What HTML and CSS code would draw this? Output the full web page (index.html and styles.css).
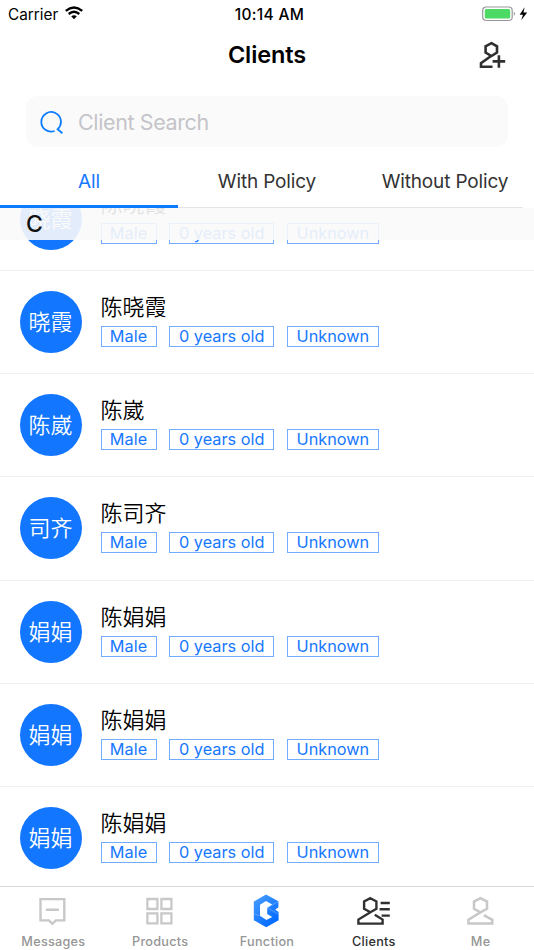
FILE: index.html
```html
<!DOCTYPE html>
<html lang="en">
<head>
<meta charset="utf-8">
<title>Clients</title>
<link rel="stylesheet" href="styles.css">
</head>
<body>
<div class="app">
  <header class="status">
    <div class="carrier"><span class="carrier-name">Carrier</span>
      <svg width="18" height="14" viewBox="0 0 18 14" fill="none" stroke="#000" stroke-width="2.4"><path d="M.8 4.8Q9-2 17.2 4.8M3.7 8Q9 3.5 14.3 8"/><path d="M6.2 10.3Q9 8.2 11.8 10.3L9 13.2Z" fill="#000" stroke="none"/></svg>
    </div>
    <span class="time">10:14 AM</span>
    <svg class="battery" width="46" height="16" viewBox="0 0 46 16"><rect x=".7" y="1" width="29.5" height="13.5" rx="3.5" fill="#fff" stroke="#999" stroke-width="1.2"/><rect x="2.8" y="3.1" width="25.4" height="9.4" rx="1.6" fill="#4cd964"/><path d="M31.8 5.6Q34.3 7.8 31.8 10Z" fill="#999"/><path d="M42.6 1.3L37.6 8.7H41L39.2 14.3L45.2 6.5H41.5Z"/></svg>
  </header>
  <div class="titlebar">
    <h1>Clients</h1>
    <svg class="add" width="28" height="28" viewBox="0 0 28 28" fill="none" stroke="#303030" stroke-width="2.6"><path d="M13.4 2.2L19 5.3V11.5L13.4 15L7.6 11.5V5.3Z M13.4 14.7L3 22.2V25.7H14.5M14.6 20.4H27.2M20.9 14.2V26.7"/></svg>
  </div>
  <div class="search">
    <svg width="24" height="24" viewBox="0 0 24 24" fill="none" stroke="#0b7cff" stroke-width="1.8"><path d="M14.6 21A9.8 9.8 0 1 1 17.6 19.2L22.4 23.2M17.6 19.2L19.2 17.6"/></svg>
    <span class="placeholder">Client Search</span>
  </div>
  <nav class="tabs">
    <div class="tab active"><span>All</span></div>
    <div class="tab"><span>With Policy</span></div>
    <div class="tab"><span>Without Policy</span></div>
  </nav>
  <main class="list">
    <div class="section">C</div>
    <div class="rows">
      <div class="row"><div class="avatar">晓霞</div><div class="info"><div class="name">陈晓霞</div><div class="tags"><span class="tag male">Male</span><span class="tag age">0 years old</span><span class="tag unknown">Unknown</span></div></div></div>
      <div class="row"><div class="avatar">晓霞</div><div class="info"><div class="name">陈晓霞</div><div class="tags"><span class="tag male">Male</span><span class="tag age">0 years old</span><span class="tag unknown">Unknown</span></div></div></div>
      <div class="row"><div class="avatar">陈崴</div><div class="info"><div class="name">陈崴</div><div class="tags"><span class="tag male">Male</span><span class="tag age">0 years old</span><span class="tag unknown">Unknown</span></div></div></div>
      <div class="row"><div class="avatar">司齐</div><div class="info"><div class="name">陈司齐</div><div class="tags"><span class="tag male">Male</span><span class="tag age">0 years old</span><span class="tag unknown">Unknown</span></div></div></div>
      <div class="row"><div class="avatar">娟娟</div><div class="info"><div class="name">陈娟娟</div><div class="tags"><span class="tag male">Male</span><span class="tag age">0 years old</span><span class="tag unknown">Unknown</span></div></div></div>
      <div class="row"><div class="avatar">娟娟</div><div class="info"><div class="name">陈娟娟</div><div class="tags"><span class="tag male">Male</span><span class="tag age">0 years old</span><span class="tag unknown">Unknown</span></div></div></div>
      <div class="row"><div class="avatar">娟娟</div><div class="info"><div class="name">陈娟娟</div><div class="tags"><span class="tag male">Male</span><span class="tag age">0 years old</span><span class="tag unknown">Unknown</span></div></div></div>
    </div>
  </main>
  <footer class="bottom">
    <div class="item"><svg width="36" height="36" viewBox="0 0 36 36" fill="none" stroke="#c8c8c8" stroke-width="2.4"><path d="M6.1 6.1H29.9V27.4H21.5L18 30.8L14.5 27.4H6.1ZM11.5 16.7H24.5"/></svg><span>Messages</span></div>
    <div class="item"><svg width="36" height="36" viewBox="0 0 36 36" fill="none" stroke="#c8c8c8" stroke-width="2.3"><path d="M6 6H16V16H6ZM20 6H30V16H20ZM6 20.4H16V30.4H6ZM20 20.4H30V30.4H20Z"/></svg><span>Products</span></div>
    <div class="item"><svg width="36" height="36" viewBox="0 0 36 36"><defs><linearGradient id="g" x1="0" y1="0" x2=".7" y2="1"><stop stop-color="#4da0ff"/><stop offset="1" stop-color="#0068ff"/></linearGradient></defs><path d="M17.6 1.6L30 8.2V14.2L26.8 16.7L30.2 19V27.2L17.8 34.2L5.4 27.2V8.6Z" fill="url(#g)"/><path d="M17.6 8L23.8 11.5L18.8 15V21L23.8 24L18 27L11.6 22.8V11.8Z" fill="#fff"/><path d="M5.4 20.8L11.6 22.8M18.8 15L30 8.2M19 15L30.2 21" fill="none" stroke="#8fc1ff" stroke-width=".5"/></svg><span>Function</span></div>
    <div class="item current"><svg width="36" height="36" viewBox="0 0 36 36" fill="none" stroke="#303030" stroke-width="2.4"><path d="M15 5.2L21 8.4V15.8L15 19.2L8.7 15.8V8.4ZM15 19.2L3 26.6V30.6H27.2V26.6L19.4 21.8M25.2 10H34.4M24.2 16.3H34.4M26.2 22.6H34.4"/></svg><span>Clients</span></div>
    <div class="item"><svg width="36" height="36" viewBox="0 0 36 36" fill="none" stroke="#c8c8c8" stroke-width="2.5"><path d="M18 5.2L24.6 8.6V15.8L18 19.4L11.6 15.8V8.6ZM18 19.4L6.1 26.8V30.6H29.9V26.8L21.4 22.1"/></svg><span>Me</span></div>
  </footer>
</div>
</body>
</html>
```
FILE: styles.css
```css
* { box-sizing: border-box; }
body { margin: 0; background: #fff; color: #000; font-family: Inter, "Noto Sans CJK SC", sans-serif; }
.app { width: 534px; height: 950px; display: flex; flex-direction: column; overflow: hidden; }
.status { height: 28px; flex: none; display: grid; grid-template-columns: 1fr auto 1fr; align-items: center; padding: 0 6px 0 8px; font-size: 15.3px; white-space: nowrap; }
.carrier { display: flex; align-items: center; gap: 7px; }
.carrier svg { margin-bottom: 2px; }
.time { font-weight: 500; font-size: 15.5px; letter-spacing: .3px; padding-left: 3px; }
.battery { justify-self: end; margin-bottom: 1px; }
.titlebar { height: 68px; flex: none; display: grid; grid-template-columns: 1fr auto 1fr; padding-right: 28px; padding-left: 28px; }
h1 { grid-column: 2; margin: 12px 0 0; font-size: 23.5px; line-height: 30px; font-weight: 600; letter-spacing: -.1px; }
.add { justify-self: end; margin-top: 12.5px; }
.search { height: 51px; flex: none; margin: 0 26px; border-radius: 12px; background: #fafafa; display: flex; align-items: center; padding-left: 14px; gap: 14px; }
.placeholder { font-size: 21.5px; letter-spacing: -.38px; color: #c4c4c9; }
.tabs { height: 61px; flex: none; display: grid; grid-template-columns: repeat(3, 178px); font-size: 19px; letter-spacing: -.15px; color: #333; }
.tab { display: flex; justify-content: center; padding-top: 23px; line-height: 24px; height: 61px; border-bottom: 1px solid #e4e4e4; white-space: nowrap; }
.tab:last-child { width: 167px; padding-left: 11px; }
.tab.active { color: #1677ff; border-bottom: 3px solid #0b7cff; }
.list { flex: 1; min-height: 0; overflow: hidden; position: relative; }
.section { position: absolute; z-index: 1; top: 0; left: 0; right: 0; height: 32px; padding-left: 26px; background: rgba(249, 249, 249, .9); font-size: 23px; line-height: 33px; font-weight: 500; color: #111; }
.rows { margin-top: -40.2px; }
.row { height: 103.2px; display: flex; align-items: center; padding-left: 19.5px; gap: 19px; border-bottom: 1px solid #f0f0f0; }
.avatar { width: 62px; height: 62px; flex: none; border-radius: 50%; background: #1276ff; color: #fff; font: 350 22px/59px "Noto Sans CJK SC", sans-serif; text-align: center; }
.info { display: flex; flex-direction: column; gap: 7px; padding-bottom: 6px; }
.name { font: 350 22px/28px "Noto Sans CJK SC", sans-serif; }
.tags { display: flex; gap: 12.5px; }
.tag { height: 21px; border: 1px solid #70adff; color: #1677ff; font-size: 16.3px; line-height: 19px; text-align: center; white-space: nowrap; }
.male { width: 56px; }
.age { width: 105.4px; }
.unknown { width: 92px; }
.bottom { height: 64px; flex: none; border-top: 1px solid #d9d9d9; display: grid; grid-template-columns: repeat(5, 1fr); background: #fff; }
.item { display: flex; flex-direction: column; align-items: center; padding-top: 6px; font-size: 12.7px; font-weight: 500; line-height: 18px; letter-spacing: .25px; color: #969696; }
.item svg { transform: translateX(-.6px); }
.item span { margin-top: 4px; }
.current { color: #303030; }
```
